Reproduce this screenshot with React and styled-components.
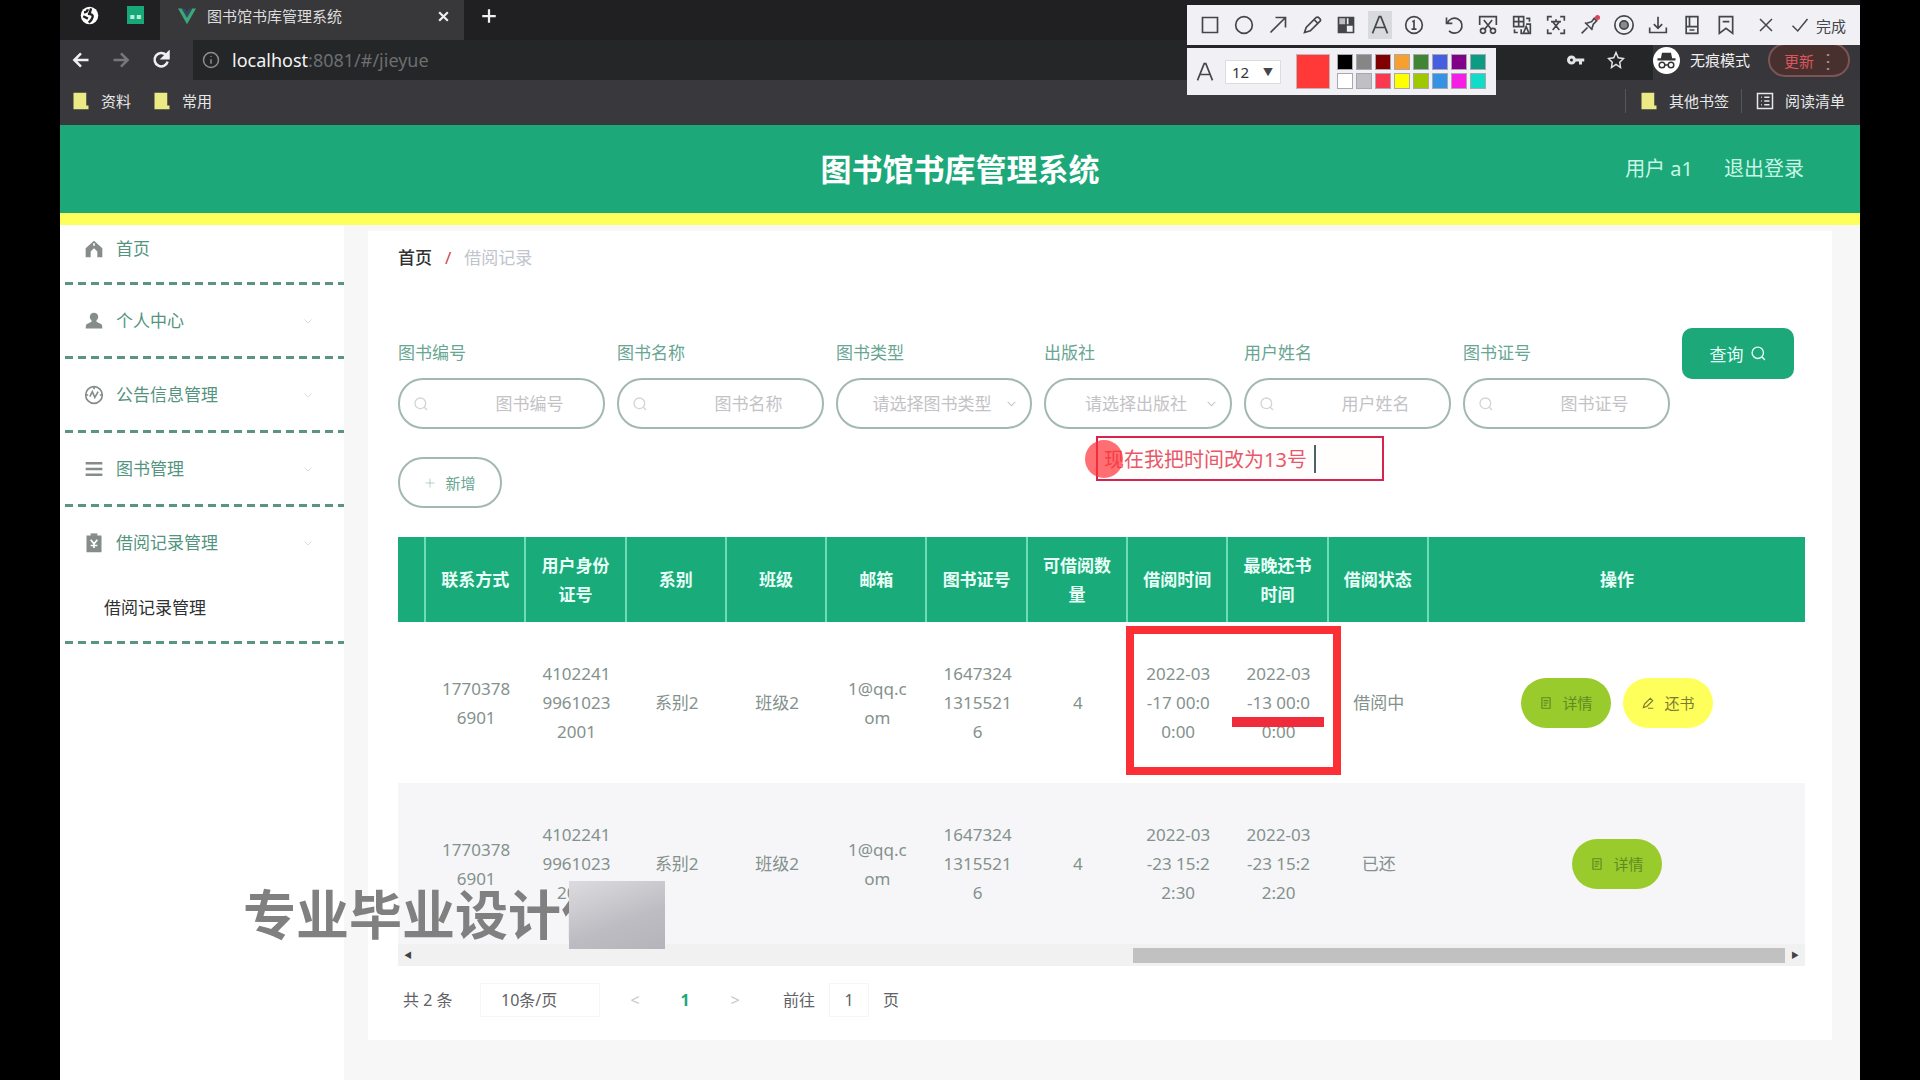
import styled, { createGlobalStyle } from "styled-components";


const GlobalStyle = createGlobalStyle`
  * { box-sizing: border-box; }

  body {
    margin: 0;
    background: #000;
    font-family: "Noto Sans", "Noto Sans CJK SC", sans-serif;
    font-size: 17px;
    line-height: 24px;
  }

  button, input, select {
    font-family: inherit;
    margin: 0;
  }
`;


const menu = [
  { label: "首页", icon: "home" },
  { label: "个人中心", icon: "user", arrow: true },
  { label: "公告信息管理", icon: "notice", arrow: true },
  { label: "图书管理", icon: "list", arrow: true },
  { label: "借阅记录管理", icon: "record", arrow: true, children: ["借阅记录管理"] },
];

const filters = [
  { id: "bianhao", label: "图书编号", type: "text", width: 207 },
  { id: "mingcheng", label: "图书名称", type: "text", width: 207 },
  { id: "leixing", label: "图书类型", type: "select", placeholder: "请选择图书类型", width: 196 },
  { id: "chubanshe", label: "出版社", type: "select", placeholder: "请选择出版社", width: 188 },
  { id: "xingming", label: "用户姓名", type: "text", width: 207 },
  { id: "zhenghao", label: "图书证号", type: "text", width: 207 },
];

const columns = ["联系方式", "用户身份\n证号", "系别", "班级", "邮箱", "图书证号", "可借阅数\n量", "借阅时间", "最晚还书\n时间", "借阅状态"];

const rows = [
  {
    cells: ["1770378\n6901", "4102241\n9961023\n2001", "系别2", "班级2", "1@qq.c\nom", "1647324\n1315521\n6", "4", "2022-03\n-17 00:0\n0:00", "2022-03\n-13 00:0\n0:00", "借阅中"],
    canReturn: true,
  },
  {
    cells: ["1770378\n6901", "4102241\n9961023\n2001", "系别2", "班级2", "1@qq.c\nom", "1647324\n1315521\n6", "4", "2022-03\n-23 15:2\n2:30", "2022-03\n-23 15:2\n2:20", "已还"],
    canReturn: false,
  },
];

const swatches = [
  "#000000", "#868686", "#800000", "#f7a030", "#3f8534", "#4460e0", "#800088", "#0c9c84",
  "#ffffff", "#c0c0c4", "#fa3850", "#ffff00", "#a0c800", "#3592e4", "#f41ee4", "#12dcc8",
];


const paths = {
  home: <path fill="currentColor" stroke="none" d="M12 2 2 11v11h6v-7l4-4 4 4v7h6V11z M11 5h2v3h-2z" />,
  user: <path fill="currentColor" stroke="none" d="M12 2a5 5 0 0 1 3 9v2l6 3q1 1 1 5H2q0-4 1-5l6-3v-2a5 5 0 0 1 3-9z" />,
  notice: <><circle cx="12" cy="12" r="10" /><path d="M7 14l3-6 3 7 4-7M12 2v3M2 12h3M19 12h3" /></>,
  list: <path strokeWidth="3" d="M2 5h20M2 12h20M2 19h20" />,
  record: <><path fill="currentColor" d="M4 4h16v18H4z" /><path strokeWidth="3" d="M8 2h8" /><path stroke="#fff" d="M8 8l4 5 4-5M12 13v5M8 15h8" /></>,
  down: <path d="M5 9l7 7 7-7" />,
  search: <><circle cx="11" cy="11" r="8" /><path d="M17 17l4 4" /></>,
  plus: <path d="M12 3v18M3 12h18" />,
  doc: <path d="M5 3h14v18H5zM8 8h8M8 12h8M8 16h5" />,
  edit: <path d="M4 20l2-6L16 4l4 4L10 18zM12 21h9" />,
  back: <path d="M21 12H4M12 4l-8 8 8 8" />,
  forward: <path d="M3 12h17M12 4l8 8-8 8" />,
  reload: <><path d="M20 14a8 8 0 1 1-2-8l3 3" /><path fill="currentColor" d="M21 3v7h-7z" /></>,
  info: <><circle cx="12" cy="12" r="10" /><path d="M12 11v6M12 7v1" /></>,
  close: <path d="M4 4l16 16M20 4L4 20" />,
  globe: <><circle cx="12" cy="12" r="11" fill="#fff" stroke="none" /><path stroke="#222" strokeWidth="3" d="M5 8q4 0 5-4M10 10q7 0 6 4t-5 7M4 13l6 3M14 3l-2 7" /></>,
  vue: <><path fill="#3aa87c" stroke="none" d="M0 2h5l7 12 7-12h5L12 23z" /><path fill="#35495e" stroke="none" d="M5 2h4l3 5 3-5h4l-7 12z" /></>,
  key: <><circle cx="6" cy="12" r="4" strokeWidth="4" /><path strokeWidth="4" d="M11 12h12M18 12v6" /></>,
  star: <path d="M12 2l3 7 7 1-5 5 1 7-6-4-6 4 1-7-5-5 7-1z" />,
  incognito: <><circle cx="12" cy="12" r="12" fill="#fff" stroke="none" /><path fill="#333" stroke="none" d="M8 5h8l1 5H7zM4 10h16v2H4z" /><g stroke="#333" strokeWidth="1.3"><circle cx="8" cy="16" r="2.5" /><circle cx="16" cy="16" r="2.5" /><path d="M10 16h4" /></g></>,
  folder: <path fill="#ecea84" stroke="none" d="M2 1h17v17h3v5H2z" />,
  reading: <path d="M2 2h20v20H2zM7 7h1M11 7h7M7 12h1M11 12h7M7 17h1M11 17h7" />,
  rect: <path d="M3 3h18v18H3z" />,
  circle: <circle cx="12" cy="12" r="10" />,
  arrow: <path d="M3 21L21 3M9 3h12v12" />,
  pencil: <path d="M3 21l2-6L17 3q2-1 4 1t1 3L10 19zM15 6l4 4" />,
  mosaic: <><path fill="currentColor" fillOpacity="0.3" stroke="none" d="M3 3h9v9H3z" /><path fill="currentColor" stroke="none" d="M3 12h9v9H3zM15 3h6v9h-6z" /><path d="M3 3h18v18H3zM12 3v18M3 12h18" /></>,
  letter: <path d="M3 22L11 2h2l8 20M6 15h12" />,
  number: <><circle cx="12" cy="12" r="10" /><path d="M10 8l2-1v10M9 17h6" /></>,
  undo: <path d="M3 3v7h7M4 10a9 9 0 1 1 2 9" />,
  cut: <><path d="M2 12V2h20v10M7 6l9 11M17 6L8 17" /><circle cx="6" cy="19" r="3" /><circle cx="18" cy="19" r="3" /></>,
  translate: <><path d="M2 2h12v12H2zM2 8h12M8 2v12M17 4h4v4M3 17v4h4" /><path d="M11 17v5h11V11h-5M14 21l3-7 3 7" /></>,
  ocr: <path d="M2 7V2h5M17 2h5v5M22 17v5h-5M7 22H2v-5M6 8h12M12 5v3M8 18l8-10M8 8l8 10" />,
  pin: <><path d="M2 22l7-7M6 9l9 9M8 10l6-2 3-4 3 3-4 4-2 6" /><circle cx="21" cy="3" r="3" fill="#e0405c" stroke="none" /></>,
  target: <><circle cx="12" cy="12" r="11" /><circle cx="12" cy="12" r="5" fill="currentColor" fillOpacity="0.6" /></>,
  download: <path d="M12 2v14M7 11l5 5 5-5M2 15v6h20v-6" />,
  phone: <path d="M5 2h14v20H5zM5 14h14M9 18h6M9 2v12" />,
  bookmark: <path d="M4 2h16v20l-8-6-8 6zM8 8h8" />,
  check: <path d="M2 13l7 7L22 4" />,
};

const Icon = ({ name, size = 20, weight = 2 }) => (
  <Svg $size={size} viewBox="0 0 24 24" strokeWidth={weight} aria-hidden="true">{paths[name]}</Svg>
);


const App = () => {
  return (
    <Frame>
      <GlobalStyle />
      <Browser />
      <SiteHeader>
        <SiteTitle>图书馆书库管理系统</SiteTitle>
        <Account>
          <span>用户 a1</span>
          <LogoutLink href="#/login">退出登录</LogoutLink>
        </Account>
      </SiteHeader>
      <Body>
        <Sidebar />
        <Main>
          <Card>
            <Breadcrumb>
              <Crumb href="#/">首页</Crumb>
              <Slash>/</Slash>
              <Current>借阅记录</Current>
            </Breadcrumb>
            <Filters />
            <AddButton type="button"><Icon name="plus" size={12} weight={1} />新增</AddButton>
            <Records />
            <Pagination />
          </Card>
        </Main>
      </Body>
      <CaptureTools />
      <HighlightBox />
      <Underline />
      <Note>
        <NoteInput aria-label="标注文字" defaultValue="现在我把时间改为13号" />
        <Caret />
      </Note>
      <Pointer />
      <Watermark>专业毕业设计作<Cover /></Watermark>
    </Frame>
  );
};


const Browser = () => (
  <>
    <TabStrip>
      <PinnedTabs>
        <Icon name="globe" size={19} />
        <TabDivider />
        <GreenBadge>■ ■</GreenBadge>
      </PinnedTabs>
      <Tab>
        <Icon name="vue" size={18} />
        <TabTitle>图书馆书库管理系统</TabTitle>
        <ChromeButton type="button" aria-label="关闭标签页"><Icon name="close" size={13} weight={4} /></ChromeButton>
      </Tab>
      <NewTab>
        <ChromeButton type="button" aria-label="新标签页"><Icon name="plus" size={18} weight={3} /></ChromeButton>
      </NewTab>
    </TabStrip>
    <AddressRow>
      <NavButtons>
        <ChromeButton type="button" aria-label="后退"><Icon name="back" size={20} weight={3} /></ChromeButton>
        <ChromeButton type="button" aria-label="前进" $dim><Icon name="forward" size={20} weight={3} /></ChromeButton>
        <ChromeButton type="button" aria-label="刷新"><Icon name="reload" size={20} weight={3} /></ChromeButton>
      </NavButtons>
      <AddressBar>
        <Icon name="info" size={18} />
        <Url><b>localhost</b>:8081/#/jieyue</Url>
        <BarIcons><Icon name="key" size={18} /><Icon name="star" size={18} /></BarIcons>
      </AddressBar>
      <Profile><Icon name="incognito" size={27} />无痕模式</Profile>
      <UpdateButton type="button">更新<span>⋮</span></UpdateButton>
    </AddressRow>
    <Bookmarks>
      <Bookmark href="#/ziliao"><Icon name="folder" size={18} />资料</Bookmark>
      <Bookmark href="#/changyong"><Icon name="folder" size={18} />常用</Bookmark>
      <BookmarkSide>
        <Bookmark href="#/other"><Icon name="folder" size={18} />其他书签</Bookmark>
        <Bookmark href="#/reading"><Icon name="reading" size={18} />阅读清单</Bookmark>
      </BookmarkSide>
    </Bookmarks>
  </>
);


const Sidebar = () => (
  <Aside>
    {menu.map((item) => (
      <MenuGroup key={item.label}>
        <MenuItem href="#/" $first={item.icon === "home"}>
          <Icon name={item.icon} size={20} />
          <span>{item.label}</span>
          {item.arrow && <MenuArrow><Icon name="down" size={12} /></MenuArrow>}
        </MenuItem>
        {item.children?.map((child) => <SubItem href="#/jieyue" key={child}>{child}</SubItem>)}
      </MenuGroup>
    ))}
  </Aside>
);


const Filters = () => (
  <FilterRow>
    {filters.map((f) => (
      <Field key={f.id} $width={f.width}>
        <FieldLabel htmlFor={f.id}>{f.label}</FieldLabel>
        <Control>
          {f.type === "select" ? (
            <>
              <FieldSelect id={f.id} defaultValue="">
                <option value="">{f.placeholder}</option>
              </FieldSelect>
              <Suffix><Icon name="down" size={13} /></Suffix>
            </>
          ) : (
            <>
              <Prefix><Icon name="search" size={16} /></Prefix>
              <FieldInput id={f.id} type="text" placeholder={f.label} />
            </>
          )}
        </Control>
      </Field>
    ))}
    <SearchButton type="button">查询<Icon name="search" size={17} /></SearchButton>
  </FilterRow>
);


const Records = () => (
  <TableWrap>
    <Table>
      <colgroup>
        <NarrowCol />
        {columns.map((c) => <col key={c} />)}
        <ActionCol />
      </colgroup>
      <thead>
        <tr>
          <Th />
          {columns.map((c) => <Th key={c}>{c}</Th>)}
          <Th>操作</Th>
        </tr>
      </thead>
      <tbody>
        {rows.map((row, i) => (
          <Tr key={i} $striped={i % 2 === 1}>
            <Td />
            {row.cells.map((cell, n) => <Td key={n}>{cell}</Td>)}
            <Td>
              <Actions>
                <RowButton type="button"><Icon name="doc" size={14} />详情</RowButton>
                {row.canReturn && <RowButton type="button" $yellow><Icon name="edit" size={14} />还书</RowButton>}
              </Actions>
            </Td>
          </Tr>
        ))}
      </tbody>
    </Table>
    <ScrollTrack>
      <span>◀</span>
      <ScrollThumb />
      <span>▶</span>
    </ScrollTrack>
  </TableWrap>
);


const Pagination = () => (
  <Pager>
    <Total>共 2 条</Total>
    <SizeSelect aria-label="每页条数"><option>10条/页</option></SizeSelect>
    <PageButton type="button" aria-label="上一页">&lt;</PageButton>
    <PageButton type="button" $active>1</PageButton>
    <PageButton type="button" aria-label="下一页">&gt;</PageButton>
    <Jump>前往<JumpInput defaultValue="1" />页</Jump>
  </Pager>
);


const CaptureTools = () => (
  <ToolLayer>
    <ToolBar>
      <ToolGroup>
        {["rect", "circle", "arrow", "pencil", "mosaic", "letter", "number"].map((n) => (
          <Tool type="button" key={n} aria-label={n} $active={n === "letter"}><Icon name={n} size={20} /></Tool>
        ))}
      </ToolGroup>
      <ToolGroup>
        {["undo", "cut", "translate", "ocr", "pin", "target", "download", "phone", "bookmark"].map((n) => (
          <Tool type="button" key={n} aria-label={n}><Icon name={n} size={20} /></Tool>
        ))}
      </ToolGroup>
      <ToolGroup>
        <Tool type="button" aria-label="关闭"><Icon name="close" size={18} /></Tool>
        <DoneButton type="button"><Icon name="check" size={18} />完成</DoneButton>
      </ToolGroup>
    </ToolBar>
    <StyleBar>
      <Icon name="letter" size={20} />
      <SizePicker aria-label="字号"><option>12</option></SizePicker>
      <PickerArrow>▼</PickerArrow>
      <CurrentColor />
      <Palette>
        {swatches.map((c) => <Swatch type="button" key={c} aria-label={c} $color={c} />)}
      </Palette>
    </StyleBar>
  </ToolLayer>
);


export default App;


const Svg = styled.svg`
  flex: none;
  display: block;
  width: ${(p) => p.$size}px;
  height: ${(p) => p.$size}px;
  fill: none;
  stroke: currentColor;
`;

const Frame = styled.div`
  position: relative;
  display: flex;
  flex-direction: column;
  min-height: 100vh;
  margin: 0 60px;
  background: #f7f7f7;
`;


/* browser window */

const TabStrip = styled.div`
  display: flex;
  align-items: center;
  gap: 16px;
  height: 40px;
  background: #202022;
  color: #ddd;
`;

const PinnedTabs = styled.div`
  display: flex;
  align-items: center;
  gap: 14px;
  width: 84px;
  padding: 0 0 10px 20px;
`;

const TabDivider = styled.span`
  width: 1px;
  height: 22px;
  background: #444;
`;

const GreenBadge = styled.span`
  flex: none;
  width: 17px;
  height: 18px;
  background: #18a878;
  color: #b4f0dc;
  font-size: 5px;
  line-height: 20px;
  text-align: center;
`;

const Tab = styled.div`
  display: flex;
  align-items: center;
  gap: 11px;
  width: 304px;
  height: 40px;
  padding: 0 14px 8px 18px;
  background: #38383a;
`;

const TabTitle = styled.span`
  flex: 1;
  font-size: 15px;
`;

const NewTab = styled.div`
  padding-bottom: 8px;
`;

const ChromeButton = styled.button`
  display: flex;
  padding: 0;
  border: none;
  background: none;
  color: ${(p) => (p.$dim ? "#77787a" : "#f0f0f0")};
  cursor: pointer;
`;

const AddressRow = styled.div`
  display: flex;
  align-items: center;
  height: 40px;
  background: #37373b;
`;

const NavButtons = styled.div`
  display: flex;
  gap: 20px;
  width: 133px;
  padding-left: 11px;
`;

const AddressBar = styled.div`
  flex: 1;
  display: flex;
  align-items: center;
  gap: 12px;
  height: 40px;
  padding: 0 28px 0 9px;
  background: #242628;
  color: #8c8e90;
`;

const Url = styled.span`
  flex: 1;
  font-size: 18px;
  color: #6c6e70;

  b {
    font-weight: 400;
    color: #f4f4f4;
  }
`;

const BarIcons = styled.div`
  display: flex;
  gap: 22px;
  color: #e4e4e4;
`;

const Profile = styled.div`
  display: flex;
  align-items: center;
  gap: 10px;
  color: #f0f0f0;
  font-size: 15px;
`;

const UpdateButton = styled.button`
  display: flex;
  align-items: center;
  justify-content: space-between;
  width: 82px;
  height: 34px;
  margin: 0 10px 0 18px;
  padding: 0 10px 0 14px;
  border: 2px solid #7c5456;
  border-radius: 17px;
  background: #48302f;
  color: #d8565c;
  font-size: 15px;

  span { color: #b08a8a; font-size: 20px; }
`;

const Bookmarks = styled.div`
  display: flex;
  align-items: center;
  gap: 22px;
  height: 45px;
  padding: 0 15px 4px 12px;
  background: #39393d;
`;

const Bookmark = styled.a`
  display: flex;
  align-items: center;
  gap: 11px;
  color: #e8e8e8;
  font-size: 15px;
  text-decoration: none;
`;

const BookmarkSide = styled.div`
  display: flex;
  gap: 12px;
  margin-left: auto;

  a {
    padding-left: 14px;
    border-left: 1px solid #55555a;
  }
`;


/* page header */

const SiteHeader = styled.header`
  display: grid;
  grid-template-columns: 1fr auto 1fr;
  align-items: center;
  height: 100px;
  padding: 0 56px;
  background: #1ca878;
  border-bottom: 12px solid #ffff5c;
`;

const SiteTitle = styled.h1`
  grid-column: 2;
  margin: 0;
  color: #fff;
  font-size: 31px;
  line-height: 44px;
`;

const Account = styled.div`
  display: flex;
  justify-content: flex-end;
  gap: 31px;
  color: #c8f6e6;
  font-size: 20px;
`;

const LogoutLink = styled.a`
  color: inherit;
  text-decoration: none;
`;

const Body = styled.div`
  flex: 1;
  display: flex;
`;


/* sidebar */

const Aside = styled.nav`
  flex: none;
  width: 284px;
  background: #fff;
`;

const MenuGroup = styled.div`
  padding-bottom: 3px;
  background: repeating-linear-gradient(90deg, transparent 0 5px, #5c9484 5px 13px) bottom / 100% 3px no-repeat;
`;

const MenuItem = styled.a`
  display: flex;
  align-items: center;
  gap: 12px;
  height: ${(p) => (p.$first ? 57 : 71)}px;
  padding: 0 30px ${(p) => (p.$first ? 10 : 0)}px 24px;
  color: #54947f;
  text-decoration: none;

  svg { color: #858c89; }
`;

const MenuArrow = styled.span`
  margin-left: auto;

  svg { color: #dcdcdc; }
`;

const SubItem = styled.a`
  display: block;
  height: 63px;
  padding: 18px 0 0 44px;
  color: #303133;
  text-decoration: none;
`;


/* content */

const Main = styled.main`
  flex: 1;
  min-width: 0;
  padding: 6px 28px 40px 24px;
`;

const Card = styled.section`
  padding: 15px 27px 23px 30px;
  background: #fff;
`;

const Breadcrumb = styled.div`
  display: flex;
  gap: 13px;
`;

const Crumb = styled.a`
  color: #303133;
  font-weight: 500;
  text-decoration: none;
`;

const Slash = styled.span`
  color: #d04858;
`;

const Current = styled.span`
  color: #c0c4cc;
`;

const FilterRow = styled.form`
  display: flex;
  align-items: flex-start;
  gap: 12px;
  margin-top: 58px;
`;

const Field = styled.div`
  flex: 0 1 ${(p) => p.$width}px;
  min-width: 0;
`;

const FieldLabel = styled.label`
  display: block;
  line-height: 50px;
  color: #68a592;
`;

const Control = styled.div`
  position: relative;
  display: flex;
  align-items: center;
  height: 51px;
  border: 2px solid #a3b8b1;
  border-radius: 25px;
  background: #fff;
`;

const FieldInput = styled.input`
  width: 100%;
  padding: 0 14px 0 70px;
  border: none;
  outline: none;
  background: none;
  font-size: 17px;
  text-align: center;

  &::placeholder { color: #c4c2c6; }
`;

const FieldSelect = styled.select`
  width: 100%;
  height: 46px;
  padding: 0 24px 0 20px;
  border: none;
  outline: none;
  background: none;
  appearance: none;
  color: #c4c2c6;
  font-size: 17px;
  text-align: center;
  text-align-last: center;
`;

const Prefix = styled.span`
  position: absolute;
  left: 13px;
  color: #d4d4d8;
`;

const Suffix = styled.span`
  position: absolute;
  right: 12px;
  color: #c8c8cc;
`;

const SearchButton = styled.button`
  display: flex;
  align-items: center;
  justify-content: center;
  gap: 6px;
  width: 112px;
  height: 51px;
  border: none;
  border-radius: 10px;
  background: #1ca878;
  color: #e4fff6;
  font-size: 17px;
`;

const AddButton = styled.button`
  display: flex;
  align-items: center;
  justify-content: center;
  gap: 9px;
  width: 104px;
  height: 51px;
  margin-top: 28px;
  border: 2px solid #a3b8b1;
  border-radius: 25px;
  background: #fff;
  color: #68a592;
  font-size: 15px;
`;

const TableWrap = styled.div`
  margin-top: 29px;
`;

const Table = styled.table`
  width: 100%;
  table-layout: fixed;
  border-collapse: separate;
  border-spacing: 0;
  line-height: 29px;
`;

const NarrowCol = styled.col`
  width: 28px;
`;

const ActionCol = styled.col`
  width: 376px;
`;

const Th = styled.th`
  height: 85px;
  padding: 0;
  background: #1aab7a;
  border-right: 2px solid #6fdcb8;
  color: #e8fff8;
  white-space: pre-line;

  &:last-child { border-right: none; }
`;

const Tr = styled.tr`
  background: ${(p) => (p.$striped ? "#f6f6f8" : "#fff")};
`;

const Td = styled.td`
  height: 161px;
  padding: 0;
  color: #84918d;
  text-align: center;
  white-space: pre-line;
`;

const Actions = styled.div`
  display: flex;
  justify-content: center;
  gap: 12px;
`;

const RowButton = styled.button`
  display: flex;
  align-items: center;
  justify-content: center;
  gap: 9px;
  width: 90px;
  height: 50px;
  border: none;
  border-radius: 25px;
  background: ${(p) => (p.$yellow ? "#ffff5c" : "#9acb2c")};
  color: ${(p) => (p.$yellow ? "#7c7c30" : "#5f8a24")};
  font-size: 15px;
`;

const ScrollTrack = styled.div`
  display: flex;
  align-items: center;
  justify-content: space-between;
  height: 22px;
  padding: 0 6px;
  background: #f1f1f1;
  color: #444;
  font-size: 8px;
`;

const ScrollThumb = styled.div`
  width: 652px;
  height: 15px;
  margin: 0 6px 0 auto;
  background: #c1c1c1;
`;

const Pager = styled.div`
  display: flex;
  align-items: center;
  height: 34px;
  margin-top: 17px;
  padding-left: 5px;
  color: #606266;
  font-size: 16px;
`;

const Total = styled.span`
  width: 77px;
`;

const SizeSelect = styled.select`
  width: 120px;
  height: 34px;
  margin-right: 10px;
  padding: 0 20px;
  border: 1px solid #f6f6f8;
  background: #fff;
  appearance: none;
  color: #606266;
  font-size: 16px;
`;

const PageButton = styled.button`
  width: 50px;
  padding: 0;
  border: none;
  background: none;
  color: ${(p) => (p.$active ? "#1ca878" : "#c8c8cc")};
  font-size: 16px;
  font-weight: ${(p) => (p.$active ? 700 : 400)};
`;

const Jump = styled.label`
  display: flex;
  align-items: center;
  margin-left: 23px;
`;

const JumpInput = styled.input`
  width: 40px;
  height: 34px;
  margin: 0 14px;
  padding: 0;
  border: 1px solid #f6f6f8;
  color: #606266;
  font-size: 16px;
  text-align: center;
`;


/* screen capture overlay */

const ToolLayer = styled.div`
  position: absolute;
  top: 5px;
  right: 0;
  width: 673px;
  color: #44464c;
`;

const ToolBar = styled.div`
  display: flex;
  gap: 6px;
  height: 40px;
  padding: 0 6px;
  background: #f1f1f5;
`;

const ToolGroup = styled.div`
  display: flex;
  align-items: center;
`;

const Tool = styled.button`
  display: flex;
  align-items: center;
  justify-content: center;
  width: 34px;
  height: 28px;
  padding: 0 5px;
  border: none;
  background: ${(p) => (p.$active ? "#d8dade" : "none")};
  background-clip: content-box;
  color: inherit;
`;

const DoneButton = styled.button`
  display: flex;
  align-items: center;
  gap: 7px;
  padding: 0 0 0 8px;
  border: none;
  background: none;
  color: inherit;
  font-size: 15px;
  white-space: nowrap;
`;

const StyleBar = styled.div`
  display: flex;
  align-items: center;
  width: 309px;
  height: 47px;
  margin-top: 3px;
  padding: 0 10px 0 8px;
  background: #f1f1f5;
`;

const SizePicker = styled.select`
  flex: none;
  width: 56px;
  height: 24px;
  margin-left: 10px;
  padding: 0 6px;
  border: 1px solid #dcdce2;
  background: #fff;
  appearance: none;
  color: #33353a;
  font-size: 15px;
  line-height: 20px;
`;

const PickerArrow = styled.span`
  flex: none;
  width: 12px;
  margin: 0 6px 0 -18px;
  font-size: 10px;
  pointer-events: none;
`;

const CurrentColor = styled.span`
  flex: none;
  width: 34px;
  height: 35px;
  margin: 0 7px 0 15px;
  border: 1px solid #c4b4b8;
  background: #ff3838;
`;

const Palette = styled.div`
  display: grid;
  grid-template-columns: repeat(8, 16px);
  gap: 3px;
`;

const Swatch = styled.button`
  width: 16px;
  height: 16px;
  padding: 0;
  border: 1px solid #a8a8b0;
  background: ${(p) => p.$color};
`;

const HighlightBox = styled.div`
  position: absolute;
  top: 626px;
  left: 1066px;
  width: 215px;
  height: 149px;
  border: 8px solid #fb3036;
`;

const Underline = styled.div`
  position: absolute;
  top: 717px;
  left: 1172px;
  width: 92px;
  height: 10px;
  background: #f02c3a;
`;

const Note = styled.div`
  position: absolute;
  top: 436px;
  left: 1036px;
  display: flex;
  align-items: center;
  width: 288px;
  height: 45px;
  border: 2px solid #d8244c;
  background: #fffefc;
`;

const NoteInput = styled.input`
  width: 210px;
  padding: 0 0 0 6px;
  border: none;
  outline: none;
  background: none;
  color: #e8586a;
  font-size: 20px;
`;

const Caret = styled.span`
  width: 2px;
  height: 28px;
  margin-left: 6px;
  background: #4c6468;
`;

const Pointer = styled.div`
  position: absolute;
  top: 440px;
  left: 1025px;
  width: 38px;
  height: 38px;
  border-radius: 50%;
  background: rgba(255, 48, 56, 0.7);
`;

const Watermark = styled.div`
  position: absolute;
  top: 881px;
  left: 183px;
  width: 422px;
  height: 68px;
  overflow: hidden;
  color: #808080;
  font-size: 53px;
  font-weight: 700;
  line-height: 68px;
  white-space: nowrap;
`;

const Cover = styled.span`
  position: absolute;
  top: 0;
  right: 0;
  width: 96px;
  height: 68px;
  background: linear-gradient(160deg, #dcdce0, #bcbcc2 60%, #b4b4ba);
`;
